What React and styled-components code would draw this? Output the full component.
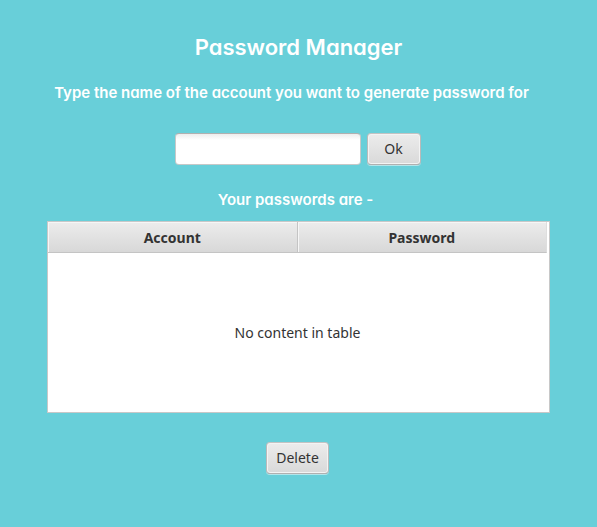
import React, { useState } from "react";
import styled, { createGlobalStyle } from "styled-components";

const GlobalStyle = createGlobalStyle`
  * { box-sizing: border-box; }
  body {
    margin: 0;
    background: #68cfd9;
    color: #333;
    font-family: "Noto Sans", "Open Sans", sans-serif;
    font-size: 14px;
  }
`;

const Page = styled.main`
  display: flex;
  flex-direction: column;
  align-items: center;
  padding: 32px 47px 53px;
`;

const Title = styled.h1`
  margin: 0;
  color: #fff;
  font: 600 22px/30px "Century Gothic", Inter, sans-serif;
  font-feature-settings: "cv11";
`;

const Caption = styled.label`
  display: block;
  color: #fff;
  font: 600 15px/20px "Century Gothic", Inter, sans-serif;
  font-feature-settings: "cv11";
  text-align: center;
  margin-top: 21px;
  padding-right: 14px;
`;

const TableCaption = styled.h2`
  margin: 25px 0 11px;
  padding-right: 6px;
  color: #fff;
  font: 600 15px/20px "Century Gothic", Inter, sans-serif;
  font-feature-settings: "cv11";
`;

const AccountForm = styled.form`
  display: flex;
  align-items: flex-start;
  gap: 6px;
  margin-top: 30px;
  padding-right: 2px;
`;

const AccountInput = styled.input`
  width: 186px;
  height: 32px;
  padding: 4px 9px;
  border: 1px solid;
  border-color: #b0b0b0 #c8c8c8 #c6c8c8;
  border-radius: 4px;
  background: linear-gradient(#ededed, #fff 6px);
  font: inherit;
  color: inherit;
  outline: none;
`;

const Button = styled.button`
  min-width: ${({ $width }) => $width}px;
  height: 32px;
  padding: 0 8px 2px;
  border: 1px solid;
  border-color: #c3c3c3 #bababa #b0b0b0;
  border-radius: 4px;
  background: linear-gradient(#ececec, #d9d9d9);
  box-shadow: inset 0 0 0 1px #f3f3f3, 0 1px 0 #b4e4e9;
  font: inherit;
  color: #333;
`;

const PasswordTable = styled.table`
  width: 100%;
  table-layout: fixed;
  border-collapse: separate;
  border-spacing: 0;
  border: 1px solid #c8c8c8;
  padding-right: 2px;
  background: #fff;
`;

const HeaderCell = styled.th`
  height: 31px;
  padding: 2px 0 0;
  border-right: 1px solid #c4c4c4;
  border-bottom: 1px solid #c4c4c4;
  background: linear-gradient(#ececec, #d8d8d8);
  box-shadow: inset 1px 1px 0 #f6f6f6;
  font-weight: 700;
  line-height: 20px;

  &:last-child { border-right-color: #dedede; }
`;

const EmptyCell = styled.td`
  height: 159px;
  padding: 0;
  text-align: center;
`;

const Actions = styled.div`
  display: flex;
  justify-content: center;
  margin-top: 29px;
  padding-right: 2px;
`;

export default function App() {
  const [account, setAccount] = useState("");

  return (
    <>
      <GlobalStyle />
      <Page>
        <Title>Password Manager</Title>
        <Caption htmlFor="account">
          Type the name of the account you want to generate password for
        </Caption>
        <AccountForm onSubmit={(event) => event.preventDefault()}>
          <AccountInput
            id="account"
            type="text"
            value={account}
            onChange={(event) => setAccount(event.target.value)}
          />
          <Button type="submit" $width={54}>Ok</Button>
        </AccountForm>
        <TableCaption id="passwords-heading">Your passwords are -</TableCaption>
        <PasswordTable aria-labelledby="passwords-heading">
          <thead>
            <tr>
              <HeaderCell scope="col">Account</HeaderCell>
              <HeaderCell scope="col">Password</HeaderCell>
            </tr>
          </thead>
          <tbody>
            <tr>
              <EmptyCell colSpan={2}>No content in table</EmptyCell>
            </tr>
          </tbody>
        </PasswordTable>
        <Actions>
          <Button type="button" $width={63}>Delete</Button>
        </Actions>
      </Page>
    </>
  );
}
